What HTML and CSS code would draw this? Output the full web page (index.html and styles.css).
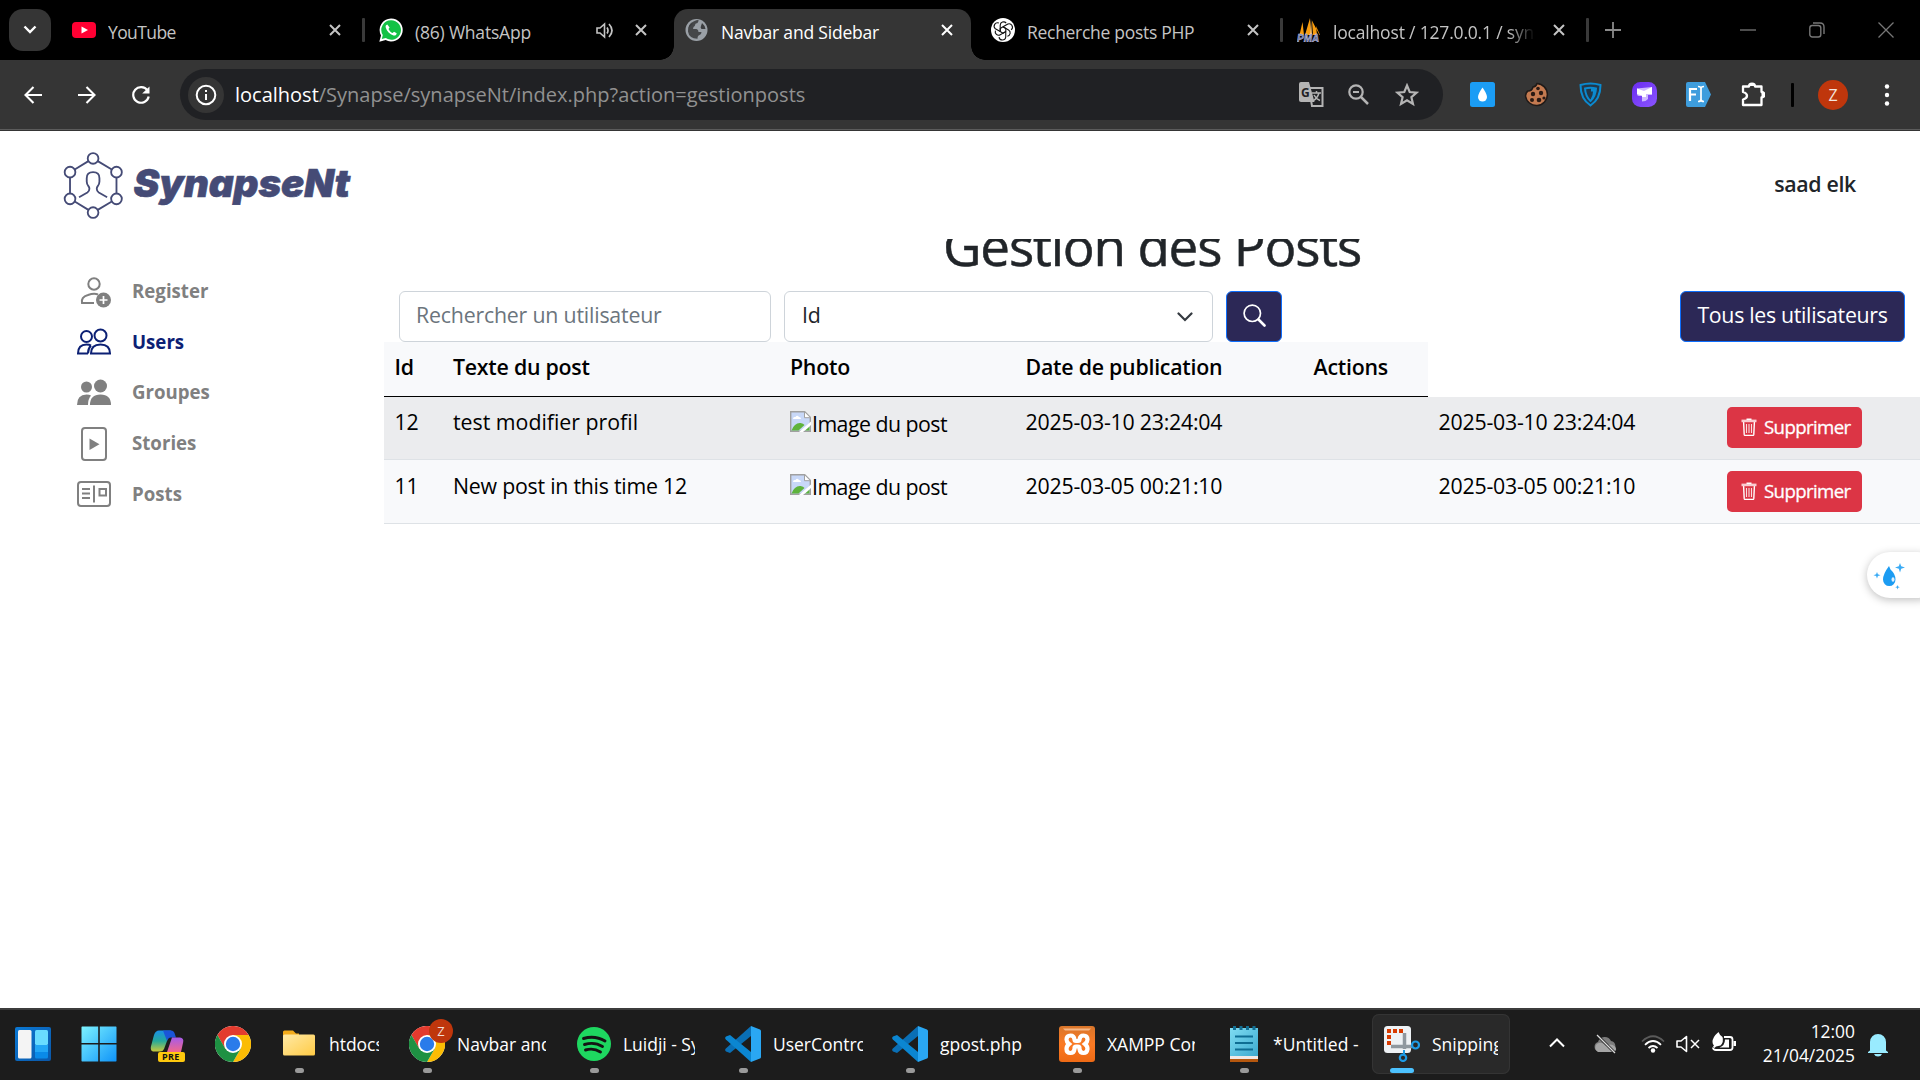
FILE: index.html
```
<!DOCTYPE html>
<html lang="fr">
<head>
<meta charset="utf-8">
<title>Navbar and Sidebar</title>
<link rel="stylesheet" href="styles.css">
</head>
<body>
<svg class="defs" width="0" height="0" aria-hidden="true">
  <defs>
    <linearGradient id="g-win" x1="0" y1="0" x2="1" y2="1"><stop offset="0" stop-color="#7df3ff"/><stop offset="1" stop-color="#0f93f8"/></linearGradient>
    <linearGradient id="g-wid" x1="0" y1="0" x2="1" y2="1"><stop offset="0" stop-color="#0a78d4"/><stop offset="1" stop-color="#0b57a8"/></linearGradient>
    <linearGradient id="g-cop1" x1="0" y1="0" x2="0" y2="1"><stop offset="0" stop-color="#1a8fe8"/><stop offset=".5" stop-color="#25a99a"/><stop offset="1" stop-color="#c9c93a"/></linearGradient>
    <linearGradient id="g-cop2" x1="0" y1="0" x2="0" y2="1"><stop offset="0" stop-color="#a65bea"/><stop offset="1" stop-color="#f2688a"/></linearGradient>
    <linearGradient id="g-fold" x1="0" y1="0" x2="1" y2="1"><stop offset="0" stop-color="#ffe9a6"/><stop offset="1" stop-color="#ffcb45"/></linearGradient>
    <linearGradient id="g-note" x1="0" y1="0" x2="1" y2="1"><stop offset="0" stop-color="#7fdcf2"/><stop offset="1" stop-color="#3ba9cf"/></linearGradient>
    <linearGradient id="g-xam" x1="0" y1="0" x2="0" y2="1"><stop offset="0" stop-color="#d9762b"/><stop offset=".5" stop-color="#fb7a24"/><stop offset="1" stop-color="#ee6a15"/></linearGradient>
    <linearGradient id="g-pur" x1="0" y1="0" x2="1" y2="1"><stop offset="0" stop-color="#6a2cf0"/><stop offset="1" stop-color="#8a55ff"/></linearGradient>
    <symbol id="close" viewBox="0 0 12 12"><path d="M1 1l10 10M11 1L1 11" stroke="currentColor" stroke-width="2" fill="none"/></symbol>
    <symbol id="chrome" viewBox="0 0 36 36">
      <circle cx="18" cy="18" r="18" fill="#fff"/>
      <path d="M2.4 9A18 18 0 0 1 33.6 9H18L10 22.5z" fill="#e33b2e"/>
      <path d="M18 9h15.6A18 18 0 0 1 18 36l7.8-13.5z" fill="#fbbc04"/>
      <path d="M2.4 9A18 18 0 0 0 18 36l7.8-13.5L18 25l-7.8-2.5z" fill="#1e9143"/>
      <circle cx="18" cy="18" r="9" fill="#fff"/><circle cx="18" cy="18" r="7.2" fill="#2a7bea"/>
    </symbol>
    <symbol id="vscode" viewBox="0 0 36 36">
      <path d="M26 0v10L5 27 1 25.500Q-.6 24 .8 22.500z" fill="#0a6fb5"/>
      <path d="M26 36V26L5 9 1 10.500Q-.6 12 .8 13.500z" fill="#0b86d1"/>
      <path d="M26 0l9 3.500q1 .5 1 1.500v26q0 1-1 1.500L26 36z" fill="#2aa7f3"/>
    </symbol>
    <symbol id="trash" viewBox="0 0 16 18"><path d="M2.600 4l.6 12.400q.1 1 1 1h7.600q.9 0 1-1L13.400 4" fill="none" stroke="#fff" stroke-width="1.400"/><path d="M.5 1.600h15v2.600H.5z" fill="#f9ccd1"/><path d="M5.500.5h5v1.500h-5z" fill="#fff"/><path d="M5.500 6v9M8 6v9M10.500 6v9" stroke="#fbdde0" stroke-width="1.100"/></symbol>
    <symbol id="broken" viewBox="0 0 21 21">
      <path d="M.7.700h14l5.600 5.600v14H.7z" fill="#c8d8f8" stroke="#a0a0a0" stroke-width="1.400"/>
      <path d="M14.500.700v6h6z" fill="#fff" stroke="#a0a0a0"/>
      <path d="M3 8q0-2.500 2.500-2 1.500-2.500 3.500 0 2 0 2 2z" fill="#fff"/>
      <path d="M1.500 19.500q3-8 9-7.500 3 .3 4 2l-6 5.500z" fill="#5eb33c"/><path d="M15 19.500l4.500-4v4z" fill="#5eb33c"/>
      <path d="M9 21L21 10.500v3.500l-8 7z" fill="#fff"/>
    </symbol>
  </defs>
</svg>

<header class="tabstrip">
  <div class="tab-search"><svg width="14" height="10" viewBox="0 0 14 10"><path d="M1.500 1.500L7 7l5.500-5.500" fill="none" stroke="#fff" stroke-width="2.400"/></svg></div>
  <div class="tab first">
    <svg class="fav" viewBox="0 0 24 24"><rect y="4" width="24" height="16" rx="4" fill="#ff0033"/><path d="M9.500 8.500v7l6.500-3.500z" fill="#fff"/></svg>
    <span class="tab-title tight">YouTube</span>
    <svg class="x"><use href="#close"/></svg><i class="sep"></i>
  </div>
  <div class="tab">
    <svg class="fav" viewBox="0 0 24 24"><path d="M12 .5A11.500 11.500 0 0 0 2 17.500L.3 23.700l6.400-1.600A11.500 11.500 0 1 0 12 .5z" fill="#fff"/><path d="M12 2.300a9.700 9.700 0 0 0-8.200 14.800l-1 3.900 4-1A9.700 9.700 0 1 0 12 2.300z" fill="#14c245"/><path d="M8.300 6.500c-1.300.3-2 1.600-1.500 3.300 1 3.700 4 6.600 7.700 7.600 1.700.4 3-.5 3.200-2.200l-2.700-1.500-1.300 1.300c-2-.8-3.300-2.100-4.200-4.100l1.100-1.300z" fill="#fff"/></svg>
    <span class="tab-title">(86) WhatsApp</span>
    <svg class="speaker" viewBox="0 0 18 16"><path d="M1 5.500h3L8.500 1.500v13L4 10.500H1z" fill="none" stroke="#c4c4c4" stroke-width="1.600"/><path d="M11 5q2 3 0 6M13 1.500q6 6.500 0 13" fill="none" stroke="#c4c4c4" stroke-width="1.700"/></svg>
    <svg class="x"><use href="#close"/></svg>
  </div>
  <div class="tab active">
    <svg class="fav" viewBox="0 0 24 24"><circle cx="11.500" cy="12" r="11" fill="#9aa0a6"/><path d="M13.500 3q-.5 2.500-3 2.800-.5 2.700-2 3.200l-.5 2h3.500q2 .5 2 3h3q0 2.500-2 3-2 .5-2 3.800Q4 20.500 3 13.500h4.500q.5 2 3 2v1.500H9q-3-1-3-3.500H3Q2.500 6 8.500 3.500t5-.5z" fill="#3c3d3f" opacity=".9"/><path d="M8 5.500q-2 2-4.500 4.500 1.500-5 4.500-4.500zM17 5q3 2.500 3.500 6h-4q-1.500-1.500-.5-3z" fill="#3c3d3f"/></svg>
    <span class="tab-title">Navbar and Sidebar</span>
    <svg class="x"><use href="#close"/></svg>
  </div>
  <div class="tab">
    <svg class="fav" viewBox="0 0 24 24"><circle cx="12" cy="12" r="12" fill="#fff"/><g fill="none" stroke="#111" stroke-width="1.100" stroke-linejoin="round"><path id="knot" d="M9.200 13.600V7.200a3.400 3.400 0 0 1 6-2.100M12 8.800l4.900-2.800a3.400 3.400 0 0 1 3.200 5.900"/><use href="#knot" transform="rotate(120 12 12)"/><use href="#knot" transform="rotate(240 12 12)"/><path d="M12 8.800l2.800 1.600v3.200L12 15.200l-2.800-1.600v-3.200z"/></g></svg>
    <span class="tab-title snug">Recherche posts PHP</span>
    <svg class="x"><use href="#close"/></svg><i class="sep"></i>
  </div>
  <div class="tab">
    <svg class="fav" viewBox="0 0 24 24"><path d="M5.500 4L2.500 17H7zM13 0L8 17h6zM15 2.500l1 14.500h6.500zM19 8l4 9h-3z" fill="#f89c0e"/><path d="M14 1l1 16h-2z" fill="#ffc36b"/><text x="0" y="23.500" class="pma">PMA</text></svg>
    <span class="tab-title faded">localhost / 127.0.0.1 / syn</span>
    <svg class="x"><use href="#close"/></svg><i class="sep"></i>
  </div>
  <svg class="newtab" viewBox="0 0 16 16"><path d="M8 0v16M0 8h16" stroke="#8a8a8a" stroke-width="1.800"/></svg>
  <div class="winctl">
    <svg width="16" height="16"><path d="M0 8h16" stroke="#777" stroke-width="1.300"/></svg>
    <svg width="16" height="16"><rect x=".8" y="3.500" width="11" height="11.500" rx="2.500" fill="none" stroke="#777" stroke-width="1.400"/><path d="M4 1h7q4 0 4 4v7" fill="none" stroke="#777" stroke-width="1.400"/></svg>
    <svg width="16" height="16"><path d="M.5.500l15 15M15.500.500l-15 15" stroke="#777" stroke-width="1.300"/></svg>
  </div>
</header>

<div class="toolbar">
  <div class="nav-btns">
    <svg viewBox="0 0 18 18"><path d="M18 9H2M9.500 1L1.500 9l8 8" fill="none" stroke="#fff" stroke-width="2.100"/></svg>
    <svg viewBox="0 0 18 18"><path d="M0 9h16M8.500 1l8 8-8 8" fill="none" stroke="#fff" stroke-width="2.100"/></svg>
    <svg viewBox="0 0 18 18"><path d="M15.500 4.500A7.800 7.800 0 1 0 16.700 10.500" fill="none" stroke="#fff" stroke-width="2.200"/><path d="M17.500.5v7h-7.300z" fill="#fff"/></svg>
  </div>
  <div class="omnibox">
    <span class="info"><svg viewBox="0 0 22 22" width="22" height="22"><circle cx="11" cy="11" r="9.300" fill="none" stroke="#fff" stroke-width="2"/><path d="M11 10v6M11 6v2" stroke="#fff" stroke-width="2"/></svg></span>
    <span class="url"><b>localhost</b>/Synapse/synapseNt/index.php?action=gestionposts</span>
    <svg class="o1" viewBox="0 0 25 25"><path d="M10 6h13.500v18H13z" fill="none" stroke="#b4b4b4" stroke-width="2"/><path d="M0 2q0-2 2-2h8l5.500 20H2q-2 0-2-2z" fill="#b4b4b4"/><text x="2" y="15" class="tg">G</text><path d="M13 11h9M17.500 9v2M20 11q-1.500 5-6 8M15 13q2 4 6 5.500" stroke="#b4b4b4" stroke-width="1.500" fill="none"/></svg>
    <svg class="o2" viewBox="0 0 21 21"><circle cx="8" cy="8" r="6.700" fill="none" stroke="#b4b4b4" stroke-width="2.200"/><path d="M13 13l7 7" stroke="#b4b4b4" stroke-width="2.500"/><path d="M5 8h6" stroke="#b4b4b4" stroke-width="2"/></svg>
    <svg class="o3" viewBox="0 0 24 24"><path d="M12 2.500l2.700 6.500 7 .6-5.300 4.600 1.600 6.800-6-3.600L6 21l1.600-6.800L2.300 9.600l7-.6z" fill="none" stroke="#b4b4b4" stroke-width="2.200"/></svg>
  </div>
  <div class="exts">
    <svg viewBox="0 0 25 25"><rect width="25" height="25" rx="2.500" fill="#1b9df5"/><path d="M12.500 5.500Q8 12 8 15a4.500 4.500 0 0 0 9 0Q17 12 12.500 5.500z" fill="#fff"/></svg>
    <svg viewBox="0 0 25 25"><path d="M13 1.500Q12 5 9 5 8 9 4 9 2 10 1.500 14A11 11 0 1 0 13 1.500z" fill="#c47a50" stroke="#1f1a18" stroke-width="1.500"/><g fill="#2a1a14"><circle cx="14" cy="6.500" r="1.800"/><circle cx="9" cy="12" r="2.200"/><circle cx="17" cy="11" r="2.200"/><circle cx="8" cy="18" r="2"/><circle cx="15" cy="18" r="2.300"/><circle cx="20" cy="16" r="1.600"/></g></svg>
    <svg viewBox="0 0 25 25"><path d="M2.500 3q10-3 20 0 0 14-10 20.500Q2.500 17 2.500 3z" fill="#22384a" stroke="#0b8ad0" stroke-width="2"/><path d="M7 6.500q5.500-1.500 11 0-.5 8-5.500 12.500Q7.500 14.500 7 6.500z" fill="none" stroke="#0b8ad0" stroke-width="2"/><path d="M13 6v3.500h2q0 4-2 7v2q5-5 5-12z" fill="#0b8ad0"/></svg>
    <svg viewBox="0 0 25 25"><rect width="25" height="25" rx="8.500" fill="url(#g-pur)"/><path d="M5 6.500l15-1.500v8h-4v4q-2 2.500-6 2.500V14H7q-2 0-2-2z" fill="#cdb8ff"/><path d="M5 6.500L12 9l8-4v7h-6v3h-4v-1.500L5 12z" fill="#fff"/></svg>
    <svg viewBox="0 0 25 25"><path d="M2 0h17l6 12.500L19 25H2Q0 25 0 23V2Q0 0 2 0z" fill="#3e9ddd"/><path d="M4 19V7h7M4 12.500h6" fill="none" stroke="#fff" stroke-width="2.200"/><path d="M12 4.500q3 0 3 2v11q0 2-3 2M18 4.500q-3 0-3 2v11q0 2 3 2" fill="none" stroke="#fff" stroke-width="1.700"/></svg>
    <svg viewBox="0 0 25 25"><path d="M3 4.500h6a3 2.800 0 0 1 6 0h6.500V10a3 2.700 0 0 1 0 5.500V23H3v-5.500q4-1 4-3.700T3 10z" fill="none" stroke="#fff" stroke-width="2.300" stroke-linejoin="round"/><path d="M9 4a3 3 0 0 1 6 0zM21.500 10a3 2.700 0 0 1 0 5.500z" fill="#fff"/></svg>
  </div>
  <i class="tsep"></i>
  <span class="avatar">Z</span>
  <svg class="menu" viewBox="0 0 6 22"><circle cx="3" cy="2.500" r="2.200" fill="#fff"/><circle cx="3" cy="11" r="2.200" fill="#fff"/><circle cx="3" cy="19.500" r="2.200" fill="#fff"/></svg>
</div>

<div class="page">
  <nav class="navbar">
    <div class="brand">
      <svg class="hex" viewBox="190 65 181 200"><g fill="none" stroke="#454b76" stroke-width="5.500"><circle cx="280" cy="84" r="16"/><circle cx="350" cy="125" r="16"/><circle cx="350" cy="205" r="16"/><circle cx="280" cy="246" r="16"/><circle cx="211" cy="205" r="16"/><circle cx="211" cy="125" r="16"/><path d="M266 92l-41 25M294 92l42 25M350 141v48M336 213l-42 25M266 238l-41-25M211 189v-48"/><path d="M238 200l25-14q6-4 6-11 0-4-3-8-5-6-5-14v-10q0-18 19-18t19 18v10q0 8-5 14-3 4-3 8 0 7 6 11l25 14"/></g></svg>
      <span class="brand-name">SynapseNt</span>
    </div>
    <span class="user">saad elk</span>
  </nav>
  <div class="layout">
    <aside class="sidebar">
      <a class="item"><svg viewBox="0 0 34 34"><g fill="none" stroke="#808080" stroke-width="2"><circle cx="17" cy="9" r="5.700"/><path d="M17 28H5q-1.200-6 6-8 6-2 10-.5"/></g><circle cx="26.500" cy="25" r="7.500" fill="#808080"/><path d="M26.500 21v8M22.500 25h8" stroke="#fff" stroke-width="1.700"/></svg>Register</a>
      <a class="item current"><svg viewBox="0 0 34 34"><g fill="none" stroke="#0c2074" stroke-width="2"><circle cx="9.500" cy="11.500" r="5.500"/><circle cx="23.500" cy="10.500" r="6"/><path d="M14 28.500q0-9 9.500-9t9.500 9zM11 28.500H1q0-9 8.500-9 3 0 4.500 1M11 28.500q0-5 3-8"/></g></svg>Users</a>
      <a class="item"><svg viewBox="0 0 34 34"><g fill="#808080"><circle cx="9.500" cy="11" r="5.500"/><circle cx="23.500" cy="10" r="6.500"/><path d="M13 29q0-10.500 10.500-10.500T34 29zM0 29q0-10.500 9.500-10.500 3 0 4.500 1-3 3.500-3 9.500z"/></g></svg>Groupes</a>
      <a class="item"><svg viewBox="0 0 34 34"><rect x="5" y="1" width="24" height="32" rx="3" fill="none" stroke="#808080" stroke-width="2"/><path d="M12.500 11.500v11.500l10-5.700z" fill="#808080"/></svg>Stories</a>
      <a class="item"><svg viewBox="0 0 34 34"><g fill="none" stroke="#808080" stroke-width="2"><rect x="1" y="5" width="32" height="24" rx="3"/><path d="M5 12h8M5 16.500h8M5 21h8M17 8.500v17"/><rect x="22.500" y="12" width="6.500" height="6.500"/></g></svg>Posts</a>
    </aside>
    <main class="content">
      <h1>Gestion des Posts</h1>
      <form class="search">
        <div class="field query">Rechercher un utilisateur</div>
        <div class="field select">Id<svg viewBox="0 0 16 10"><path d="M1.500 1.500L8 8l6.500-6.500" fill="none" stroke="#343a40" stroke-width="2.200" stroke-linecap="round"/></svg></div>
        <div class="btn go"><svg viewBox="0 0 23 23"><circle cx="9.300" cy="9.300" r="8.200" fill="none" stroke="#fff" stroke-width="1.700"/><path d="M15.500 15.500l6 6" stroke="#fff" stroke-width="2.600" stroke-linecap="round"/></svg></div>
        <div class="btn all">Tous les utilisateurs</div>
      </form>
      <table>
        <colgroup><col class="c1"><col class="c2"><col class="c3"><col class="c4"><col class="c5"><col class="c6"><col class="c7"></colgroup>
        <thead><tr><th>Id</th><th>Texte du post</th><th>Photo</th><th>Date de publication</th><th>Actions</th></tr></thead>
        <tbody>
          <tr class="odd"><td>12</td><td class="wide">test modifier profil</td><td class="img"><svg><use href="#broken"/></svg>Image du post</td><td>2025-03-10 23:24:04</td><td></td><td>2025-03-10 23:24:04</td><td class="act"><span class="del"><svg><use href="#trash"/></svg>Supprimer</span></td></tr>
          <tr class="even"><td>11</td><td>New post in this time 12</td><td class="img"><svg><use href="#broken"/></svg>Image du post</td><td>2025-03-05 00:21:10</td><td></td><td>2025-03-05 00:21:10</td><td class="act"><span class="del"><svg><use href="#trash"/></svg>Supprimer</span></td></tr>
        </tbody>
      </table>
    </main>
  </div>
  <div class="floater"><svg viewBox="0 0 32 28"><path d="M16 4Q10 12 10 17.500a6 6.300 0 0 0 12.500 0Q22.500 12 17.500 7.500z" fill="#1c9cf2"/><ellipse cx="20" cy="17.500" rx="1.500" ry="2.200" fill="#dff1fe"/><path d="M27 1l1.200 3.300L32 5.500l-3.800 1.200L27 10.500l-1.200-3.800L22 5.500l3.800-1.200zM4 10l.9 2.300 2.600.9-2.600.9L4 16.500l-.9-2.400L.5 13.200l2.600-.9zM24.500 23l.6 1.600 1.700.6-1.700.6-.6 1.700-.6-1.700-1.700-.6 1.700-.6z" fill="#3aabf5"/></svg></div>
</div>

<footer class="taskbar">
  <svg class="ti wid" viewBox="0 0 36 36"><rect y="1" width="36" height="34" rx="2" fill="url(#g-wid)"/><rect x="3" y="4" width="13.500" height="28.500" rx="1.500" fill="#f4f4f4"/><rect x="20" y="4" width="13" height="15" rx="1.500" fill="#69dcff"/><path d="M20 19h13v7H20z" fill="#22a6f5"/><path d="M20 26h13v5q0 1.500-1.500 1.500h-10Q20 32.500 20 31z" fill="#0a8ae8"/></svg>
  <svg class="ti win" viewBox="0 0 36 36"><path d="M1 .5h16.200V17H.5V1zM18.800.500H35l.5.500v16H18.800zM.5 18.600h16.700v16.900H1L.5 35zM18.800 18.600h16.700V35l-.5.500H18.800z" fill="url(#g-win)"/></svg>
  <svg class="ti cop" viewBox="0 0 36 36"><path d="M9 4.500h12l-7 18.500q-1 2.500-4 2.500H3Q.5 25 .8 21L4 9Q5.500 4.500 9 4.500z" fill="url(#g-cop1)"/><path d="M13 4.500h8q3 0 4 4l1 3h-5q-3 0-4 3.500z" fill="#1b55d8"/><path d="M22 11.500h8q4 .5 3.200 4.500L31 26H17z" fill="url(#g-cop2)"/><rect x="8" y="26" width="27" height="10" rx="2" fill="#ffc90e"/><text x="12" y="34.200" class="pre">PRE</text></svg>
  <svg class="ti chr"><use href="#chrome"/></svg>
  <div class="task t1"><span class="ico"><svg viewBox="0 0 36 36"><path d="M2 6q0-1.500 1.500-1.500h8.500l3 3H18v5H2z" fill="#f3ab1b"/><rect x="2" y="8.500" width="32" height="21" rx="1.500" fill="url(#g-fold)"/></svg></span><span class="label">htdocs</span></div>
  <div class="task t2"><span class="ico"><svg><use href="#chrome"/></svg><b class="badge">Z</b></span><span class="label">Navbar and</span></div>
  <div class="task t3"><span class="ico"><svg viewBox="0 0 36 36"><circle cx="18" cy="18" r="17" fill="#1ed760"/><path d="M7.500 12.500q11.500-3.500 21.500 2.500M8.500 18.500q10-3 18 2M9.500 24q8-2.500 15 2" fill="none" stroke="#141414" stroke-width="2.900" stroke-linecap="round"/></svg></span><span class="label">Luidji - Sy</span></div>
  <div class="task t4"><span class="ico"><svg><use href="#vscode"/></svg></span><span class="label">UserContro</span></div>
  <div class="task t5"><span class="ico"><svg><use href="#vscode"/></svg></span><span class="label">gpost.php</span></div>
  <div class="task t6"><span class="ico"><svg viewBox="0 0 36 36"><rect width="36" height="36" rx="3" fill="url(#g-xam)"/><path d="M4 2.500h28l-2 2H6z" fill="#f5b98a"/><path d="M11.500 9.500q-4 0-4 4 0 2.500 2.500 4.500-2.500 2-2.500 5 0 4 4 4 3.500 0 4-4v-1q0-1.500 1.500-1.500h2q1.500 0 1.500 1.500v1q.5 4 4 4t4-4q0-3-2.500-5 2.500-2 2.500-4.500 0-4-4-4-3.500 0-4 4 0 1.500-1.500 1.500h-2q-1.500 0-1.500-1.500-.5-4-4-4z" fill="none" stroke="#fff" stroke-width="4.200"/></svg></span><span class="label">XAMPP Con</span></div>
  <div class="task t7"><span class="ico"><svg viewBox="0 0 36 36"><path d="M4 2h28v29H4z" fill="url(#g-note)"/><path d="M4 30h28v3H4z" fill="#f0e9e6"/><path d="M4 33h28v3H4z" fill="#b5570e"/><path d="M8.500 0v4M15 0v4M21.500 0v4M28 0v4" stroke="#126e92" stroke-width="3"/><path d="M9 10.500h18M9 17h18M9 23.500h18" stroke="#0e6d93" stroke-width="2"/></svg></span><span class="label">*Untitled -</span></div>
  <div class="task t8 on"><span class="ico"><svg viewBox="0 0 36 36"><rect width="27" height="27" rx="3.500" fill="#eef2f5"/><path d="M5 19V5h15" fill="none" stroke="#d83b01" stroke-width="4" stroke-dasharray="4 2"/><path d="M20.500 7v16M7 20.500h21" stroke="#8f989f" stroke-width="3.500"/><circle cx="31.500" cy="19" r="3.500" fill="none" stroke="#1d9be6" stroke-width="2.200"/><circle cx="19" cy="31.800" r="3.200" fill="none" stroke="#1d9be6" stroke-width="2.200"/><path d="M20 28.500V24" stroke="#1d9be6" stroke-width="2"/></svg></span><span class="label">Snipping</span></div>
  <div class="tray">
    <svg class="y1" viewBox="0 0 16 10"><path d="M1 8.500L8 1.500l7 7" fill="none" stroke="#fff" stroke-width="2"/></svg>
    <svg class="y2" viewBox="0 0 24 20"><path d="M5 17.500a5 5 0 0 1 0-9.500A7 7 0 0 1 18 7a5.500 5.500 0 0 1 1 10.500z" fill="#7c7c7c"/><path d="M5 18a4.800 4.800 0 0 1 1-9q4-1 7 3 5-3 9 .5 3 4-2 5.500z" fill="#a5a5a5"/><path d="M4 1l18 18" stroke="#1c1c1c" stroke-width="2.600"/><path d="M4 1l18 18" stroke="#ddd" stroke-width="1.300"/></svg>
    <svg class="y3" viewBox="0 0 24 18"><path d="M1 6.500q11-10.500 22 0" fill="none" stroke="#5a5a5a" stroke-width="1.700"/><path d="M4 9.800q8-7.500 16 0M7.500 13q4.500-4 9 0" fill="none" stroke="#fff" stroke-width="1.800"/><circle cx="12" cy="15.500" r="2.200" fill="#fff"/></svg>
    <svg class="y4" viewBox="0 0 24 18"><path d="M1 6h4l5.500-4.500v15L5 12H1z" fill="none" stroke="#fff" stroke-width="1.600" stroke-linejoin="round"/><path d="M15 5l8 8M23 5l-8 8" stroke="#fff" stroke-width="1.500"/></svg>
    <svg class="y5" viewBox="0 0 24 20"><path d="M12 5h6q2.500 0 2.500 2.500v8Q20.500 18 18 18H4q-3 0-3-2.500" fill="none" stroke="#fff" stroke-width="1.800"/><path d="M.5 10Q.5 5 6.500 0q1 3 4 5 1.500 5-2 8.500L4 14.500 2.500 16 1 14.500l1-1Q.5 12 .5 10z" fill="#fff"/><path d="M13 7.500h4v8H7.500q5.500-2 5.500-8zM21.500 9H24v5h-2.500z" fill="#fff"/></svg>
    <div class="clock"><span>12:00</span><span>21/04/2025</span></div>
    <svg class="y6" viewBox="0 0 20 24"><path d="M2 17.500V9a8 8 0 0 1 16 0v8.500l2 1.500v1H0v-1zM6 21h8q-1 2.500-4 2.500T6 21z" fill="#99ebff"/></svg>
  </div>
</footer>
</body>
</html>
```
FILE: styles.css
```
*{box-sizing:border-box}
body{margin:0;width:1920px;height:1080px;overflow:hidden;display:flex;flex-direction:column;background:#fff;font-family:"Open Sans","Noto Sans",sans-serif}
svg{display:block;flex:none}
.defs{position:absolute}

/* browser tabs */
.tabstrip{height:60px;background:#000;display:flex;align-items:center;flex:none}
.tab-search{width:42px;height:42px;margin:0 7px 0 9px;border-radius:14px;background:#353535;display:flex;align-items:center;justify-content:center;flex:none}
.tab{position:relative;width:306px;height:60px;display:flex;align-items:center;flex:none;padding:0 23px 0 15px;color:#c4c4c4}
.tab.first{padding-left:14px}
.fav{width:24px;height:24px;margin-right:12px}
.tab-title{flex:1;min-width:0;overflow:hidden;white-space:nowrap;font-size:17.5px;line-height:30px;letter-spacing:-.2px;padding-top:3px}
.tab-title.tight{letter-spacing:-.6px}
.tab-title.snug{letter-spacing:-.29px}
.tab-title.faded{margin-right:10px;letter-spacing:-.18px;-webkit-mask-image:linear-gradient(90deg,#000 175px,transparent 202px);mask-image:linear-gradient(90deg,#000 175px,transparent 202px)}
.x{width:12px;height:12px}
.speaker{width:18px;height:17px;margin-right:21px}
.sep{position:absolute;right:-1px;top:18px;width:3px;height:24px;background:#3a3a3a;border-radius:1px}
.active{color:#fff}
.active::before{content:"";position:absolute;left:4px;top:9px;width:297px;height:51px;border-radius:14px 14px 0 0;background:#353535}
.active::after{content:"";position:absolute;left:-10px;bottom:0;width:325px;height:14px;background:radial-gradient(circle at 0 0,transparent 13.500px,#353535 14px) left/14px 14px no-repeat,radial-gradient(circle at 100% 0,transparent 13.500px,#353535 14px) right/14px 14px no-repeat}
.active>*{position:relative;z-index:1}
.pma{font:italic bold 10px "Liberation Sans",sans-serif;fill:#6a70a8;stroke:#d5d7ea;stroke-width:.4px}
.newtab{width:16px;height:16px;margin-left:17px}
.winctl{display:flex;gap:53px;margin-left:auto;margin-right:26px}

/* address row */
.toolbar{height:71px;flex:none;background:#353535;display:flex;align-items:flex-start;padding-top:9px;box-shadow:inset 0 -1px #353535,inset 0 -2px #5c5c5c;position:relative}
.toolbar>*{height:51px}
.nav-btns{display:flex;align-items:center;gap:36px;padding-left:24px;width:180px}
.nav-btns svg{width:18px;height:18px}
.omnibox{width:1263px;border-radius:26px;background:#202124;display:flex;align-items:center;padding:0 24px 0 8px}
.info{width:36px;height:36px;border-radius:50%;background:#353535;display:flex;align-items:center;justify-content:center;margin-right:11px}
.url{flex:1;font-size:20px;line-height:30px;color:#919191}
.url b{font-weight:400;color:#fff}
.o1{width:25px;height:25px;margin-right:24px}
.o2{width:21px;height:21px;margin-right:26px}
.o3{width:24px;height:24px}
.tg{font:bold 12px "Open Sans",sans-serif;fill:#202124}
.exts{display:flex;align-items:center;gap:29px;margin-left:27px;width:321px}
.exts svg{width:25px;height:25px}
.tsep{width:3px;height:24px!important;margin-top:14px;background:#000;border-radius:1px}
.avatar{width:30px;height:30px!important;border-radius:50%;background:#bf360c;color:#f5e5df;font-size:16px;line-height:30px;text-align:center;margin:11px 0 0 24px}
.menu{width:6px;height:22px!important;margin:15px 0 0 36px}

/* web page */
.page{height:877px;flex:none;display:flex;flex-direction:column;position:relative;overflow:hidden}
.navbar{height:108px;flex:none;display:flex;justify-content:space-between;padding:0 64px 0 63px;background:#fff}
.brand{display:flex;align-items:flex-start}
.hex{width:60.500px;height:67px;margin-top:20.500px}
.brand-name{margin:27px 0 0 10px;font:italic 900 38.700px/50px Inter,sans-serif;letter-spacing:-.1px;color:#454b76;-webkit-text-stroke:.6px #454b76}
.user{margin-top:37px;font-size:21.330px;line-height:32px;font-weight:600;letter-spacing:-.32px;color:#212529}
.layout{flex:1;display:grid;grid-template-columns:384px 1536px;min-height:0}
.sidebar{padding:35px 0 0 77px;display:flex;flex-direction:column;gap:16.700px}
.item{display:flex;align-items:center;gap:21px;height:34px;font-size:18.670px;line-height:30px;font-weight:700;letter-spacing:0;color:#808080}
.item svg{width:34px;height:34px;margin-top:1px}
.item.current{color:#0c2074}
.content{overflow:hidden}
h1{margin:-25px 0 13px;text-align:center;font-size:53px;line-height:64px;font-weight:400;letter-spacing:-1.200px;-webkit-text-stroke:.5px #212529;color:#212529}
.search{display:flex;height:51px;padding:0 15px}
.field,.btn{height:51px;border:1px solid #ced4da;border-radius:6px;font-size:21.330px;line-height:46px;letter-spacing:-.2px;color:#212529}
.query{width:372px;padding-left:16px;color:#6c757d;margin-right:13px}
.select{width:429px;padding:0 19px 0 17px;display:flex;justify-content:space-between;margin-right:13px}
.select svg{width:16px;height:10px;margin-top:20px}
.btn{background:#2c2856;border-color:#0d6efd;color:#fff}
.go{width:56px;padding:12px 0 0 16px}
.go svg{width:23px;height:23px}
.all{width:225px;margin-left:auto;text-align:center;letter-spacing:-.32px}

table{table-layout:fixed;width:1536px;border-collapse:separate;border-spacing:0;color:#000;font-size:21.330px;line-height:32px;letter-spacing:-.24px}
.c1{width:58px}.c2{width:337px}.c3{width:236px}.c4{width:288px}.c5{width:125px}.c6{width:288px}.c7{width:204px}
th{height:55px;padding:9px 10px 0 10.600px;text-align:left;vertical-align:top;font-weight:600;background:#f8f9fb;border-bottom:1px solid #000;white-space:nowrap}
td{height:64px;padding:9px 10px 0 10.600px;vertical-align:top;background:#f8f9fb;border-bottom:1px solid #dee2e6;white-space:nowrap}
th:nth-child(2),td:nth-child(2),th:nth-child(3),td:nth-child(3){padding-left:11px}
.odd td{height:63px;background:#ebecee}
.even td{padding-top:10px}
td.wide{letter-spacing:-.01px}
td.img{padding-top:11px;letter-spacing:-.54px}
td.img svg{display:inline-block;width:21px;height:21px;vertical-align:0;margin-right:1px}
.odd td.act{padding:10px 0 0 11px;font-size:0}
.even td.act{padding:11px 0 0 11px;font-size:0}
.del{display:inline-flex;align-items:center;width:135px;height:41px;padding-left:14px;border-radius:5px;background:#dc3545;color:#fff;font-size:18.670px;line-height:38px;padding-bottom:1px;letter-spacing:-.62px;-webkit-text-stroke:.3px #fff}
.del svg{width:16px;height:18px;margin:-1px 7px 0 0}
.floater{position:absolute;right:-20px;top:421px;width:73px;height:46px;border-radius:23px;background:#fff;box-shadow:0 2px 9px rgba(0,0,0,.25);padding:10px 0 0 6px}
.floater svg{width:32px;height:28px}

/* taskbar */
.taskbar{height:72px;flex:none;background:#1c1c1c;border-top:2px solid #3c3c3c;display:flex;align-items:flex-start;color:#fff}
.ti{width:36px;height:36px;margin-top:16px}
.wid{margin-left:15px}.win{margin-left:30px}.cop{margin-left:33px}.chr{margin-left:29px}
.pre{font:bold 9px "Open Sans",sans-serif;letter-spacing:.3px;fill:#111}
.task{position:relative;height:60px;margin-top:4px;display:flex;flex:none}
.task::after{content:"";position:absolute;left:26px;bottom:1px;width:9px;height:5px;border-radius:3px;background:#9a9a9a}
.ico{position:relative;width:36px;height:36px;margin:12px 12px 0 12px;flex:none}
.ico svg{width:36px;height:36px}
.label{overflow:hidden;white-space:nowrap;font-size:17.500px;line-height:30px;height:30px;margin-top:15px;letter-spacing:-.02px}
.badge{position:absolute;left:20px;top:-7px;width:24px;height:24px;border-radius:50%;background:#bf360c;color:#f2ddd5;font-weight:400;font-size:13px;line-height:24px;text-align:center}
.t1{margin-left:18px;width:110px}
.t2{margin-left:18px;width:149px}
.t3{margin-left:18px;width:131px}
.t3 .label{margin-left:-1px}
.t4{margin-left:18px;width:150px}
.t5{margin-left:17px;width:144px}
.t6{margin-left:23px;width:148px}
.t7{margin-left:19px;width:146px}
.t7 .label{margin-left:-1px;letter-spacing:.05px}
.t8{margin-left:12px;width:138px;padding-right:12px}
.on{background:#292929;border-radius:7px;box-shadow:inset 0 0 0 1px #343434}
.on::after{left:18px;width:24px;background:#4cc2ff}
.tray{display:flex;margin-left:auto;align-items:flex-start;padding-right:32px}
.y1{width:16px;height:10px;margin:28px 28px 0 0}
.y2{width:24px;height:20px;margin:24px 24px 0 0}
.y3{width:24px;height:18px;margin:25px 11px 0 0}
.y4{width:24px;height:18px;margin:25px 12px 0 0}
.y5{width:24px;height:20px;margin:22px 1px 0 0}
.y6{width:20px;height:24px;margin-top:23px}
.clock{width:118px;margin:9px 13px 0 0;display:flex;flex-direction:column;align-items:flex-end;font-size:17.400px;line-height:24px}
```
